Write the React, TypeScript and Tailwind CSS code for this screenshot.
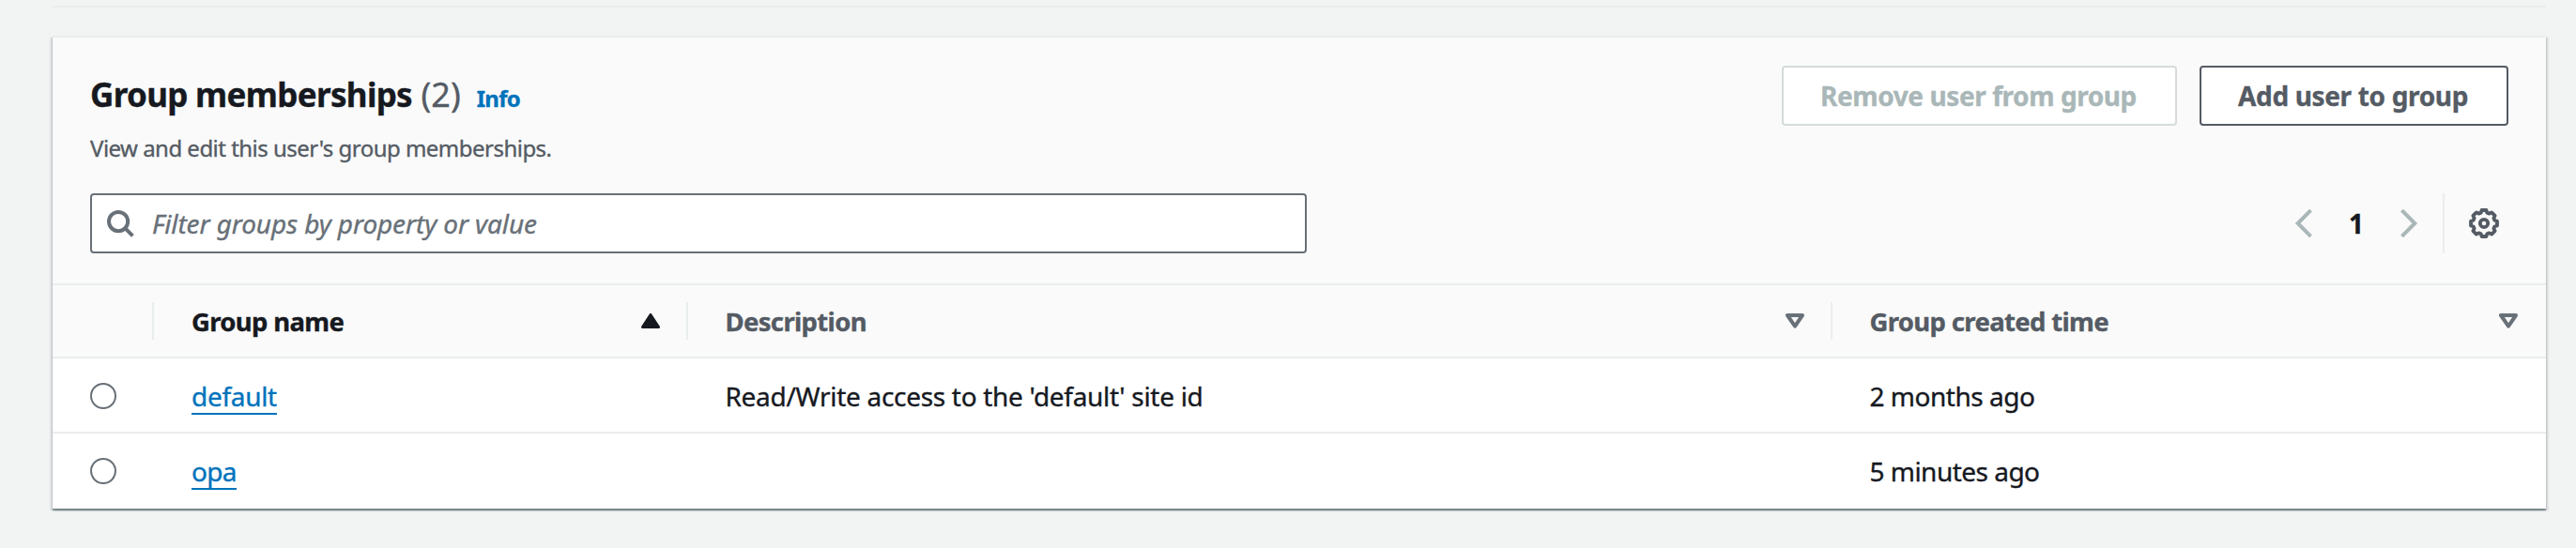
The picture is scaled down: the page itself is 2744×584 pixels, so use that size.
import type { ReactNode } from "react";

type Group = { name: string; description: string; created: string; tracking: string; createdTracking: string };

const groups: Group[] = [
  {
    name: "default",
    description: "Read/Write access to the 'default' site id",
    created: "2 months ago",
    tracking: "tracking-[-0.3px]",
    createdTracking: "tracking-[-0.48px]",
  },
  { name: "opa", description: "", created: "5 minutes ago", tracking: "tracking-[-0.65px]", createdTracking: "tracking-[-0.52px]" },
];

const COLUMNS = "grid grid-cols-[108px_569px_1219px_1fr]";

// Outline of an eight-toothed gear: each tooth and each gap contributes two vertices.
const gearPoints = Array.from({ length: 8 }, (_, i) => {
  const at = (deg: number, r: number) => {
    const a = ((i * 45 + deg - 90) * Math.PI) / 180;
    return `${(16 + r * Math.cos(a)).toFixed(2)},${(16 + r * Math.sin(a)).toFixed(2)}`;
  };
  return [at(-10, 14.2), at(10, 14.2), at(16, 11.8), at(29, 11.8)].join(" ");
}).join(" ");

function SearchIcon() {
  return (
    <svg className="size-8 shrink-0" viewBox="0 0 32 32" fill="none" stroke="#687078" strokeWidth="4">
      <circle cx="14.1" cy="14.1" r="10.1" />
      <path d="M21.2 21.2 29.4 29.4" />
    </svg>
  );
}

function GearIcon() {
  return (
    <svg className="size-8" viewBox="0 0 32 32" fill="none" stroke="#545b64" strokeLinejoin="round">
      <polygon points={gearPoints} strokeWidth="3.8" />
      <circle cx="16" cy="16" r="4.2" strokeWidth="3.8" />
    </svg>
  );
}

function Chevron({ flip = false }: { flip?: boolean }) {
  return (
    <svg className="h-8 w-[20px]" viewBox="0 0 20 32" fill="none" stroke="#aab7b8" strokeWidth="4">
      <path d={flip ? "M1.5 2.2 15.3 16 1.5 29.8" : "M18.5 2.2 4.7 16 18.5 29.8"} />
    </svg>
  );
}

function SortIcon({ active = false }: { active?: boolean }) {
  return (
    <svg className="h-4 w-5" viewBox="0 0 20 16" strokeLinejoin="round">
      {active ? (
        <path d="M10 1.5 18.5 14.5H1.5Z" fill="#16191f" stroke="#16191f" strokeWidth="3" />
      ) : (
        <path d="M2 2H18L10 13.7Z" fill="none" stroke="#687078" strokeWidth="4" />
      )}
    </svg>
  );
}

function HeaderCell({ children, active = false, last = false, pad }: { children: ReactNode; active?: boolean; last?: boolean; pad: string }) {
  return (
    <div
      className={`my-[18px] flex h-10 items-center justify-between ${pad} ${last ? "pr-[30px]" : "border-r-2 border-[#eaeded] pr-7"} ${
        active ? "text-[#16191f]" : "text-[#545b64]"
      }`}
    >
      <span className="pt-px text-[27.5px] leading-10 font-bold tracking-[-0.66px]">{children}</span>
      <SortIcon active={active} />
    </div>
  );
}

export default function App() {
  return (
    <div className="h-[584px] w-[2744px] overflow-hidden bg-[#f2f3f3] pr-8 pl-14 font-['Noto_Sans',sans-serif] text-[28px] leading-9 whitespace-nowrap text-[#16191f] [-webkit-text-stroke:0.35px]">
      <div className="pt-1.5">
        <div className="h-0.5 bg-[#eaeded]" />
      </div>

      <section className="mt-[30px] h-[504px] border-t-2 border-[#eaeded] bg-white shadow-[0_2px_1px_0_rgba(0,28,36,0.35),2px_2px_2px_0_rgba(0,28,36,0.15),-2px_2px_2px_0_rgba(0,28,36,0.15)]">
        <header className="h-[264px] border-b-2 border-[#eaeded] bg-[#fafafa] px-10 pt-[30px]">
          <div className="flex h-[136px] items-start justify-between">
            <div className="pt-[9px]">
              <div className="flex h-11 items-baseline leading-[44px]">
                <h2 className="text-[35px] font-bold tracking-[-0.67px]">Group memberships</h2>
                <span className="ml-[9.5px] text-[36px] text-[#545b64]">(2)</span>
                <a className="ml-[17px] text-[24px] font-bold tracking-[-0.7px] text-[#0073bb]">Info</a>
              </div>
              <p className="mt-[19px] text-[24px] leading-8 tracking-[-0.52px] text-[#545b64]">View and edit this user's group memberships.</p>
            </div>
            <div className="flex gap-6 font-bold">
              <button className="h-16 w-[421px] rounded-[4px] border-2 border-[#d5dbdb] bg-white pr-0.5 tracking-[-0.42px] text-[#aab7b8]">
                Remove user from group
              </button>
              <button className="h-16 w-[329px] rounded-[4px] border-2 border-[#545b64] bg-white pr-0.5 tracking-[-0.34px] text-[#545b64]">
                Add user to group
              </button>
            </div>
          </div>

          <div className="flex items-center justify-between">
            <div className="flex h-16 w-[1296px] items-center rounded-[4px] border-2 border-[#687078] bg-white pl-3.5">
              <SearchIcon />
              <span className="ml-[18px] tracking-[-0.12px] text-[#687078] italic">Filter groups by property or value</span>
            </div>
            <div className="flex h-16 items-center">
              <Chevron />
              <span className="w-[94px] text-center font-bold">1</span>
              <Chevron flip />
              <div className="ml-[25px] flex h-16 w-[70px] items-center border-l-2 border-[#eaeded] pl-[26px]">
                <GearIcon />
              </div>
            </div>
          </div>
        </header>

        <div className={`${COLUMNS} h-[78px] border-b-2 border-[#eaeded] bg-[#fafafa]`}>
          <div className="my-[18px] h-10 border-r-2 border-[#eaeded]" />
          <HeaderCell active pad="pl-10">Group name</HeaderCell>
          <HeaderCell pad="pl-[39.5px]">Description</HeaderCell>
          <HeaderCell last pad="pl-[39.5px]">Group created time</HeaderCell>
        </div>

        {groups.map((g) => (
          <div key={g.name} className={`${COLUMNS} h-20 items-center border-[#eaeded] not-last:border-b-2 not-last:pt-0.5`}>
            <div className="ml-10 size-7 rounded-full border-2 border-[#687078] bg-white" />
            <div className="flex pl-10">
              <a className={`-mb-0.5 border-b-2 border-[#0073bb] text-[#0073bb] ${g.tracking}`}>{g.name}</a>
            </div>
            <div className="pl-[39.5px] tracking-[-0.3px]">{g.description}</div>
            <div className={`pl-[39.5px] ${g.createdTracking}`}>{g.created}</div>
          </div>
        ))}
      </section>
    </div>
  );
}
